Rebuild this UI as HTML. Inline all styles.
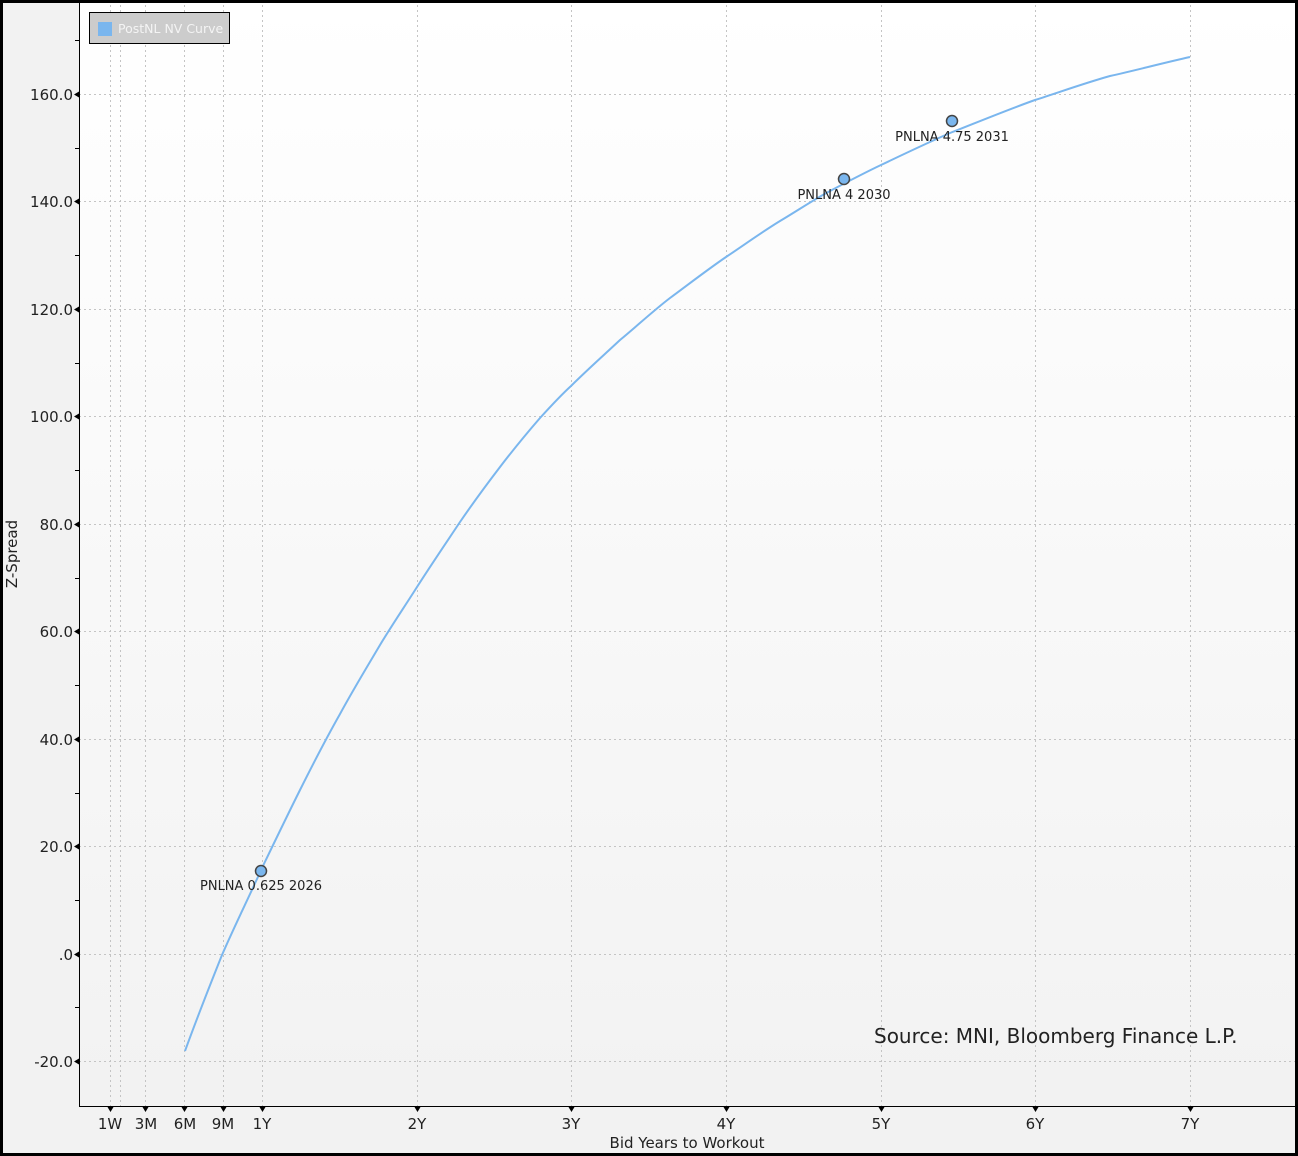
<!DOCTYPE html>
<html><head><style>
html,body{margin:0;padding:0;background:#f2f2f2}
svg{display:block;font-family:"DejaVu Sans","Liberation Sans",sans-serif}
</style></head><body>
<svg width="1298" height="1156" viewBox="0 0 1298 1156" xmlns="http://www.w3.org/2000/svg">
<defs>
<linearGradient id="bg" x1="0" y1="0" x2="0" y2="1">
<stop offset="0" stop-color="#ffffff"/><stop offset="1" stop-color="#f2f2f2"/>
</linearGradient>
</defs>
<rect width="1298" height="1156" fill="#f2f2f2"/>
<rect x="79" y="0" width="1216" height="1106" fill="url(#bg)"/>
<g stroke="#c4c4c4" stroke-width="1" stroke-dasharray="2,3" fill="none">
<line x1="79" x2="1295" y1="94.5" y2="94.5"/>
<line x1="79" x2="1295" y1="201.5" y2="201.5"/>
<line x1="79" x2="1295" y1="309.5" y2="309.5"/>
<line x1="79" x2="1295" y1="416.5" y2="416.5"/>
<line x1="79" x2="1295" y1="524.5" y2="524.5"/>
<line x1="79" x2="1295" y1="631.5" y2="631.5"/>
<line x1="79" x2="1295" y1="739.5" y2="739.5"/>
<line x1="79" x2="1295" y1="846.5" y2="846.5"/>
<line x1="79" x2="1295" y1="954.5" y2="954.5"/>
<line x1="79" x2="1295" y1="1061.5" y2="1061.5"/>
<line y1="0" y2="1106" x1="110.5" x2="110.5"/>
<line y1="0" y2="1106" x1="120.5" x2="120.5"/>
<line y1="0" y2="1106" x1="145.5" x2="145.5"/>
<line y1="0" y2="1106" x1="184.5" x2="184.5"/>
<line y1="0" y2="1106" x1="223.5" x2="223.5"/>
<line y1="0" y2="1106" x1="262.5" x2="262.5"/>
<line y1="0" y2="1106" x1="417.5" x2="417.5"/>
<line y1="0" y2="1106" x1="571.5" x2="571.5"/>
<line y1="0" y2="1106" x1="726.5" x2="726.5"/>
<line y1="0" y2="1106" x1="881.5" x2="881.5"/>
<line y1="0" y2="1106" x1="1035.5" x2="1035.5"/>
<line y1="0" y2="1106" x1="1190.5" x2="1190.5"/>
</g>
<line x1="79.5" y1="0" x2="79.5" y2="1106" stroke="#000"/>
<line x1="79" y1="1106.5" x2="1295" y2="1106.5" stroke="#000"/>
<g stroke="#000">
<line x1="75" x2="79" y1="40.5" y2="40.5"/><line x1="75" x2="79" y1="148.5" y2="148.5"/>
<line x1="75" x2="79" y1="255.5" y2="255.5"/><line x1="75" x2="79" y1="363.5" y2="363.5"/>
<line x1="75" x2="79" y1="470.5" y2="470.5"/><line x1="75" x2="79" y1="578.5" y2="578.5"/>
<line x1="75" x2="79" y1="685.5" y2="685.5"/><line x1="75" x2="79" y1="793.5" y2="793.5"/>
<line x1="75" x2="79" y1="900.5" y2="900.5"/><line x1="75" x2="79" y1="1007.5" y2="1007.5"/>
</g>
<g fill="#000">
<path d="M74 94.5l5-3v6z"/><path d="M74 201.5l5-3v6z"/><path d="M74 309.5l5-3v6z"/><path d="M74 416.5l5-3v6z"/><path d="M74 524.5l5-3v6z"/>
<path d="M74 631.5l5-3v6z"/><path d="M74 739.5l5-3v6z"/><path d="M74 846.5l5-3v6z"/><path d="M74 954.5l5-3v6z"/><path d="M74 1061.5l5-3v6z"/>
<path d="M107.5 1107h6l-3 5z"/><path d="M142.5 1107h6l-3 5z"/><path d="M181.5 1107h6l-3 5z"/><path d="M220.5 1107h6l-3 5z"/><path d="M259.5 1107h6l-3 5z"/>
<path d="M414.5 1107h6l-3 5z"/><path d="M568.5 1107h6l-3 5z"/><path d="M723.5 1107h6l-3 5z"/><path d="M878.5 1107h6l-3 5z"/><path d="M1032.5 1107h6l-3 5z"/><path d="M1187.5 1107h6l-3 5z"/>
</g>
<g font-size="15" fill="#222" text-anchor="end">
<text x="73" y="100">160.0</text><text x="73" y="207">140.0</text><text x="73" y="315">120.0</text>
<text x="73" y="422">100.0</text><text x="73" y="530">80.0</text><text x="73" y="637">60.0</text>
<text x="73" y="745">40.0</text><text x="73" y="852">20.0</text><text x="73" y="960">.0</text><text x="73" y="1067">-20.0</text>
</g>
<g font-size="15" fill="#222" text-anchor="middle">
<text x="110" y="1129">1W</text><text x="146" y="1129">3M</text><text x="185" y="1129">6M</text><text x="223" y="1129">9M</text>
<text x="262" y="1129">1Y</text><text x="417" y="1129">2Y</text><text x="571" y="1129">3Y</text><text x="726" y="1129">4Y</text>
<text x="881" y="1129">5Y</text><text x="1035" y="1129">6Y</text><text x="1190" y="1129">7Y</text>
<text x="687" y="1148">Bid Years to Workout</text>
<text transform="translate(17,554) rotate(-90)">Z-Spread</text>
</g>
<path id="curve" fill="none" stroke="#7ab6ee" stroke-width="2" d="M185 1051 C197 1018 210 985 222 955 C235 925 249 897 262 868 C275 841 287 816 300 790 C313 764 327 737 340 714 C353 690 367 667 380 645 C392 625 405 606 417 587 C431 565 446 543 460 522 C473 503 487 484 500 467 C513 450 527 433 540 418 C550 407 560 396 571 386 C587 370 604 355 620 340 C637 326 653 311 670 298 C689 284 707 270 726 257 C744 245 762 232 780 221 C797 211 813 200 830 191 C847 182 864 173 881 165 C904 154 927 143 950 133 C978 122 1007 110 1035 100 C1060 92 1085 83 1110 76 C1137 70 1163 63 1190 57"/>
<g fill="#7ab6ee" stroke="#444" stroke-width="1.5">
<circle cx="261" cy="871" r="5.5"/><circle cx="844" cy="179" r="5.5"/><circle cx="952" cy="121" r="5.5"/>
</g>
<g font-size="13" fill="#222" text-anchor="middle">
<text x="261" y="890">PNLNA 0.625 2026</text>
<text x="844" y="199">PNLNA 4 2030</text>
<text x="952" y="141">PNLNA 4.75 2031</text>
</g>
<text x="874" y="1043" font-size="20" fill="#222">Source: MNI, Bloomberg Finance L.P.</text>
<rect x="89.5" y="12.5" width="140" height="31" fill="#cccccc" stroke="#000"/>
<rect x="98" y="22" width="14" height="14" fill="#7ab6ee"/>
<text x="118" y="33" font-size="12.5" fill="#f4f4f4">PostNL NV Curve</text>
<rect x="1.5" y="1.5" width="1295" height="1153" fill="none" stroke="#000" stroke-width="3"/>
</svg>
</body></html>
